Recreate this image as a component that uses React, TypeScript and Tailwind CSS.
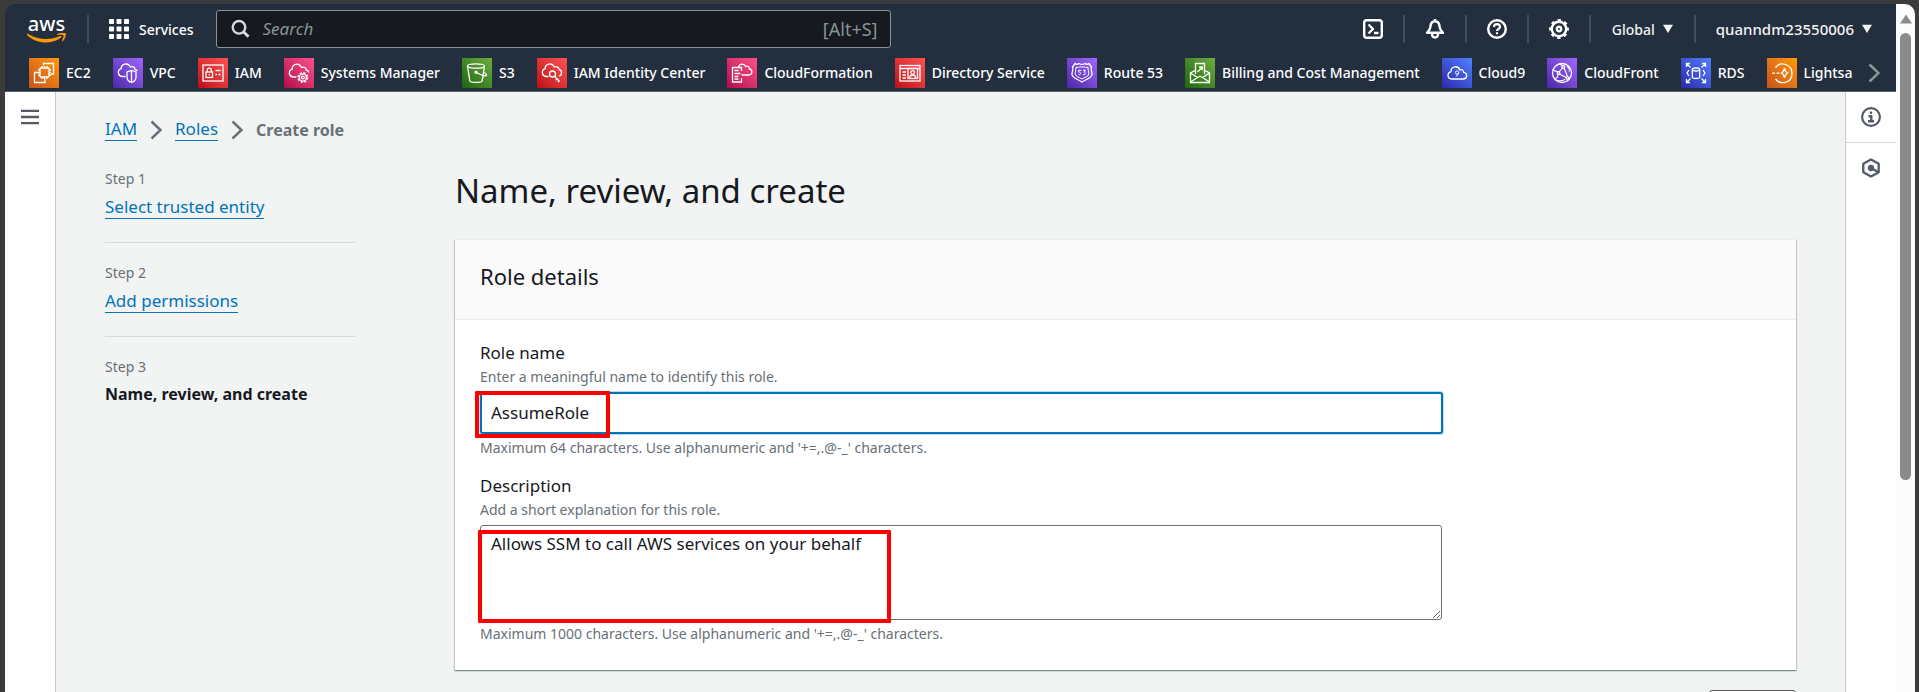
import React from "react";

type Tone = "orange" | "purple" | "red" | "pink" | "green" | "blue";

const tones: Record<Tone, string> = {
  orange: "bg-linear-to-tr from-[#c8511b] to-[#ff9900]",
  purple: "bg-linear-to-tr from-[#4d27a8] to-[#a166ff]",
  red: "bg-linear-to-tr from-[#bd0816] to-[#ff5252]",
  pink: "bg-linear-to-tr from-[#b0084d] to-[#ff4f8b]",
  green: "bg-linear-to-tr from-[#1b660f] to-[#6cae3e]",
  blue: "bg-linear-to-tr from-[#2e27ad] to-[#527fff]",
};

const favorites: { name: string; tone: Tone; art: React.ReactNode }[] = [
  {
    name: "EC2",
    tone: "orange",
    art: (
      <>
        <rect x="11" y="10" width="9" height="9" rx="0.5" />
        <path d="M13 8v2M15.5 8v2M18 8v2M13 19v2M15.5 19v2M18 19v2M9 12h2M9 14.500h2M9 17h2M20 12h2M20 14.500h2M20 17h2" />
        <path d="M14.500 7.500V5.500h10v10.500h-2.500M9.500 14.500h-4v10h10.500v-3.500" />
      </>
    ),
  },
  {
    name: "VPC",
    tone: "purple",
    art: (
      <>
        <path d="M12.500 18.500H9a4 4 0 0 1-.8-7.800C8 6.500 14.500 3.500 17.500 9c2.500-1 4.500.6 4.500 2.500 1 .2 1.800.8 2.200 1.500" />
        <path d="M18.500 12.500l4.500 1.500v5c0 3-2.200 4.800-4.500 5.500-2.300-.7-4.500-2.500-4.500-5.500v-5zM18.500 13v11" />
      </>
    ),
  },
  {
    name: "IAM",
    tone: "red",
    art: (
      <>
        <rect x="5" y="7" width="20" height="16" />
        <rect x="8" y="14" width="6.500" height="5.500" />
        <path d="M9.300 14v-1.800a2 2 0 0 1 4 0V14M11.200 16v1.500M17.500 12.500h5M17.500 16.500h1.500M20.500 16.500h2" />
      </>
    ),
  },
  {
    name: "Systems Manager",
    tone: "pink",
    art: (
      <>
        <path d="M12.500 19H9a4 4 0 0 1-.8-7.800C8 6.500 14.500 3.500 17.500 9.500c2.500-1.200 4.500.4 4.700 2.500 1.300.3 2.300 1 2.600 2.500" />
        <circle cx="18.800" cy="19.500" r="3.600" />
        <circle cx="18.800" cy="19.500" r="1.400" />
        <circle cx="18.800" cy="19.500" r="4.700" strokeDasharray="2 1.700" strokeWidth="1.500" />
      </>
    ),
  },
  {
    name: "S3",
    tone: "green",
    art: (
      <>
        <ellipse cx="14" cy="8" rx="8.500" ry="2.200" />
        <path d="M5.500 8l2.300 14.800c.4 2 12 2 12.400 0l2.300-14.800M14.500 14.500c4 2.300 9.500 4.500 10 2.800.3-1-1.500-2.300-2.800-3" />
        <circle cx="14" cy="14.200" r="1" fill="#fff" />
      </>
    ),
  },
  {
    name: "IAM Identity Center",
    tone: "red",
    art: (
      <>
        <path d="M11.500 18.500H9a4 4 0 0 1-.8-7.800C8 6 14.500 3.800 17.300 9c2.500-1 4.700.4 4.900 2.500 3 .8 3.300 5.500-.2 6.600" />
        <circle cx="15.500" cy="16" r="3" />
        <path d="M17.700 18.200l5 5.300M20 20.700l-1.300 1.500M22 22.800l-1.200 1.400" />
      </>
    ),
  },
  {
    name: "CloudFormation",
    tone: "pink",
    art: (
      <>
        <path d="M14.500 13V9.500h-9v14.500h9v-4" />
        <path d="M7.500 12.500h4M7.500 15.500h6M7.500 18.500h4M7.500 21h4M14.500 17h7c4 0 4.500-5.300 1-6 0-2.500-2-3.500-3.800-2.500-1.800-3.500-6.700-3-7.200 1" />
      </>
    ),
  },
  {
    name: "Directory Service",
    tone: "red",
    art: (
      <>
        <rect x="5" y="7.500" width="20" height="15.500" />
        <path d="M5 10.500h20M7.500 14h3.500M7.500 17h3.500M7.500 20h3.500" />
        <rect x="13" y="10.500" width="9.500" height="10" />
        <circle cx="17.700" cy="14.500" r="1.800" />
        <path d="M14.800 20c0-4 5.800-4 5.800 0" />
      </>
    ),
  },
  {
    name: "Route 53",
    tone: "purple",
    art: (
      <>
        <path d="M8 5.500c1.500 1 3 .9 4 0 1.500 1 4.500 1 6 0 1 .9 2.500 1 4 0L24.500 9c-1.500 2 .8 4.500.5 7.500-.5 4-6 4.500-10 7.500-4-3-9.500-3.500-10-7.500-.3-3 2-5.500.5-7.500z" />
        <path d="M9 9c2 .8 3.500.3 4-.3 1 .5 3 .5 4 0 .5.600 2 1.100 4 .3M9 9c.3 2.500-1 4.500-.8 7 .5 3 4 3 6.800 5 2.800-2 6.300-2 6.800-5 .2-2.500-1.100-4.500-.8-7" strokeWidth="1" />
        <path d="M14.200 12.300h-2.500v1.900c2.500-.6 2.900 3-.2 2.500M16 12.300h2.500l-1.300 1.900c2 .2 1.400 3-1.200 2.600" strokeWidth="1" />
      </>
    ),
  },
  {
    name: "Billing and Cost Management",
    tone: "green",
    art: (
      <>
        <path d="M10.500 16V5.500h9V16M10 12.500L5.500 15v9.500h19V15L20 12.500" />
        <path d="M5.500 15l7 4.500 2.500-1.300 2.500 1.300 7-4.500M5.500 24l7-4.500M24.500 24l-7-4.500M12.500 14l4.500-4.500M14 9h3.300v3.300" />
      </>
    ),
  },
  {
    name: "Cloud9",
    tone: "blue",
    art: (
      <>
        <path d="M9.500 21C5 21 5 14.300 9 13.800 8.800 8 16 7 18 12c2-1 3.500.3 3.600 2.300 4.400.7 3.900 6.700-.3 6.700z" />
        <circle cx="15" cy="14.500" r="1.600" strokeWidth="0.9" />
        <path d="M16.600 14.500c0 2-.8 3-2.600 3.500" strokeWidth="0.9" />
      </>
    ),
  },
  {
    name: "CloudFront",
    tone: "purple",
    art: (
      <>
        <circle cx="15" cy="15" r="9.500" />
        <path d="M6 12c3 1.500 4.500 1 5.500 2.500M12 14l3.500-4M12.500 16l7.500 4M7.500 21c2-.5 3.500-2 3.500-5M12 6c1.500.2 2.500 1 3.500 2.500M17 10l3.500 8.500M9 22c2 .8 6 1 9-.5M20 8c2 1.500 2.500 3 2.500 5.500" strokeWidth="1.100" />
        <circle cx="11.500" cy="15" r="1.400" />
        <circle cx="16.300" cy="9" r="1.400" />
        <circle cx="20.500" cy="20" r="1.400" />
      </>
    ),
  },
  {
    name: "RDS",
    tone: "blue",
    art: (
      <>
        <ellipse cx="15" cy="11.500" rx="3.700" ry="1.500" />
        <path d="M11.300 11.500v7.500c0 2 7.400 2 7.400 0v-7.500" />
        <path d="M5.500 9V5.500H9M6 6l3.500 3.500M21 5.500h3.500V9M24 6l-3.500 3.500M5.500 21v3.500H9M6 24l3.500-3.500M21 24.500h3.500V21M24 24l-3.500-3.500" />
        <path d="M8 12l-2 3 2 3M22 12l2 3-2 3" />
      </>
    ),
  },
  {
    name: "Lightsa",
    tone: "orange",
    art: (
      <>
        <path d="M8.500 9.500c5-6.500 16.500-3.500 16.500 6s-11.500 12-16.500 5.500" />
        <path d="M17.500 10c.5 2.800 1 4 3 5-2 1-2.500 2.200-3 5-.5-2.800-1-4-3-5 2-1 2.500-2.200 3-5zM5 15.200h3M9.500 15.200h3" />
      </>
    ),
  },
];

function AwsLogo() {
  return (
    <span className="flex w-[39px] flex-col items-center">
      <span className="text-[20px] leading-[18px] font-medium">aws</span>
      <svg className="h-[11px] w-[39px]" viewBox="0 17 39 11" aria-hidden="true">
        <path d="M0 18.200c.3-.5.800-.5 1.300-.2 9.500 6 22 6.500 31.700 2 1.300-.5 2 .7 1 1.500C24.500 28.800 9.500 28 .3 19.200 0 18.900-.1 18.500 0 18.200z" fill="#f90" />
        <path d="M30 18.300c2.500-1.800 7.500-2 8.500-1 .9 1-.3 6-2.800 8-.5.4-1 .2-.7-.4.8-2 2-4.800 1.300-5.600-.8-.8-3.600-.6-5.800-.4-.7.100-.8-.3-.5-.6z" fill="#f90" />
      </svg>
    </span>
  );
}

function Divider() {
  return <span className="h-7 w-0.5 shrink-0 bg-[#414d5c]" />;
}

function Caret() {
  return (
    <svg className="h-2.5 w-2.5" viewBox="0 0 10 10" aria-hidden="true">
      <path d="M0 0.800h10L5 9z" fill="currentColor" />
    </svg>
  );
}

function Chevron() {
  return (
    <svg className="h-5 w-3 shrink-0" viewBox="0 0 12 20" fill="none" stroke="currentColor" strokeWidth="2.500" aria-hidden="true">
      <path d="M1.500 1.500L10.500 10l-9 8.500" />
    </svg>
  );
}

function IconButton({ label, children }: { label: string; children: React.ReactNode }) {
  return (
    <button type="button" aria-label={label} className="flex h-7 w-[60px] items-center justify-center">
      <svg className="h-5 w-5" viewBox="0 0 20 20" fill="none" stroke="currentColor" strokeWidth="2.400" strokeLinejoin="round" aria-hidden="true">
        {children}
      </svg>
    </button>
  );
}

function Header() {
  return (
    <header className="border-b border-[#545b64] bg-[#232f3e] text-white">
      <div className="flex h-[50px] items-center">
        <a href="#home" className="ml-[22px] mr-[21px]">
          <AwsLogo />
        </a>
        <Divider />
        <button type="button" className="mr-[22px] ml-5 flex items-center gap-2.5 text-[14px] font-medium">
          <svg className="h-5 w-5" viewBox="0 0 20 20" fill="currentColor" aria-hidden="true">
            {[0, 7.500, 15].map((y) =>
              [0, 7.500, 15].map((x) => <rect key={`${x}-${y}`} x={x} y={y} width="5" height="5" rx="0.800" />),
            )}
          </svg>
          Services
        </button>
        <label className="flex h-[38px] w-[675px] items-center rounded-[3px] border border-[#879596] bg-[#16191f] px-3 text-[#879596]">
          <svg className="mr-3 ml-0.5 h-5 w-5 shrink-0" viewBox="0 0 20 20" fill="none" stroke="#d5dbdb" strokeWidth="2.400" aria-hidden="true">
            <circle cx="8" cy="8.300" r="6.300" />
            <path d="M12.500 12.800l5 5" strokeWidth="3" />
          </svg>
          <input
            type="search"
            aria-label="Search"
            placeholder="Search"
            className="min-w-0 flex-1 bg-transparent text-[17px] outline-none placeholder:text-[#879596] placeholder:italic"
          />
          <span className="text-[18px]">[Alt+S]</span>
        </label>
        <div className="ml-auto flex items-center">
          <IconButton label="CloudShell">
            <rect x="1.200" y="1.200" width="17.600" height="17.600" rx="2.500" />
            <path d="M5.500 5.500L10 10l-4.500 4.500M11 14h4.500" />
          </IconButton>
          <Divider />
          <IconButton label="Notifications">
            <path d="M10 2.200c-3.500 0-4.300 2.500-4.500 5.300C5.300 10.500 4 12 2 13.800h16c-2-1.800-3.300-3.300-3.500-6.300-.2-2.800-1-5.300-4.500-5.300zM10 0v2M7 14.500c0 5.300 6 5.300 6 0" />
          </IconButton>
          <Divider />
          <IconButton label="Help">
            <circle cx="10" cy="10" r="8.800" />
            <path d="M7 8c0-3.800 6-3.800 6 0 0 2-3 2-3 4M10 13.300v2" strokeWidth="2.200" />
          </IconButton>
          <Divider />
          <IconButton label="Settings">
            <circle cx="10" cy="10" r="7.200" />
            <circle cx="10" cy="10" r="2.200" />
            <circle cx="10" cy="10" r="8.800" strokeWidth="2.200" strokeDasharray="3.400 3.510" strokeDashoffset="1.700" />
          </IconButton>
          <Divider />
          <button type="button" className="flex items-center gap-2 px-[21px] text-[14px] font-medium text-[#f2f3f3]">
            Global
            <Caret />
          </button>
          <Divider />
          <button type="button" className="flex items-center gap-2 pl-5 pr-6 text-[15px] font-medium text-[#f2f3f3]">
            quanndm23550006
            <Caret />
          </button>
        </div>
      </div>
      <div className="flex h-[37px] items-center">
        <nav aria-label="Favorites" className="flex min-w-0 flex-1 gap-[22px] overflow-hidden pl-6">
          {favorites.map((f) => (
            <a key={f.name} href="#service" className="flex shrink-0 items-center gap-[7px] text-[14px] font-medium whitespace-nowrap">
              <span className={`h-[30px] w-[30px] ${tones[f.tone]}`}>
                <svg className="h-[30px] w-[30px]" viewBox="0 0 30 30" fill="none" stroke="#fff" strokeWidth="1.300" aria-hidden="true">
                  {f.art}
                </svg>
              </span>
              {f.name}
            </a>
          ))}
        </nav>
        <button type="button" aria-label="Scroll favorites right" className="ml-2.5 mr-4 text-[#879596]">
          <Chevron />
        </button>
      </div>
    </header>
  );
}

function Step({ n, children }: { n: number; children: React.ReactNode }) {
  return (
    <li className="border-b border-[#d5dbdb] pt-5 pb-[23px] first:pt-0 last:border-b-0">
      <p className="mb-1.5 text-[14px] leading-5 text-[#687078]">Step {n}</p>
      {children}
    </li>
  );
}

const link = "inline-block border-b border-[#0073bb] text-[17px] leading-[22px] text-[#0073bb]";

function Sidebar() {
  return (
    <ol className="w-[250px] shrink-0">
      <Step n={1}>
        <a href="#trusted-entity" className={link}>
          Select trusted entity
        </a>
      </Step>
      <Step n={2}>
        <a href="#permissions" className={link}>
          Add permissions
        </a>
      </Step>
      <Step n={3}>
        <p className="text-[16px] leading-[22px] font-bold">Name, review, and create</p>
      </Step>
    </ol>
  );
}

function RoleDetails() {
  return (
    <section className="border-t border-[#eaeded] bg-white shadow-[0_1px_1px_0_rgba(0,28,36,0.3),1px_1px_1px_0_rgba(0,28,36,0.15),-1px_1px_1px_0_rgba(0,28,36,0.15)]">
      <div className="border-b border-[#eaeded] bg-[#fafafa] px-[25px] pt-[21px] pb-7">
        <h2 className="text-[22px] leading-[30px]">Role details</h2>
      </div>
      <div className="flex flex-col gap-4 px-[25px] pt-[21px] pb-[26px]">
        <div className="relative max-w-[963px]">
          <label htmlFor="role-name" className="block text-[17px] leading-6">
            Role name
          </label>
          <p className="mt-0.5 mb-[5px] text-[14px] leading-5 text-[#687078]">Enter a meaningful name to identify this role.</p>
          <input
            id="role-name"
            type="text"
            defaultValue="AssumeRole"
            className="block h-[42px] w-full rounded-[3px] border-2 border-[#0073bb] bg-white px-[9px] pb-0.5 text-[17px] shadow-[0_0_0_1px_#b8dcf0] outline-none"
          />
          <p className="mt-1 text-[14px] leading-5 text-[#687078]">Maximum 64 characters. Use alphanumeric and '+=,.@-_' characters.</p>
          <span className="pointer-events-none absolute top-[50px] -left-[5px] h-[47px] w-[135px] rounded-[1px] border-4 border-[#ff0000]" />
        </div>
        <div className="relative max-w-[962px]">
          <label htmlFor="description" className="block text-[17px] leading-6">
            Description
          </label>
          <p className="mt-0.5 mb-[5px] text-[14px] leading-5 text-[#687078]">Add a short explanation for this role.</p>
          <textarea
            id="description"
            defaultValue="Allows SSM to call AWS services on your behalf"
            className="block h-[95px] w-full rounded-[3px] border border-[#687078] bg-white px-2.5 pt-[7px] text-[17px] leading-[22px] outline-none"
          />
          <p className="mt-1 text-[14px] leading-5 text-[#687078]">Maximum 1000 characters. Use alphanumeric and '+=,.@-_' characters.</p>
          <span className="pointer-events-none absolute top-14 -left-0.5 h-[93px] w-[413px] rounded-[1px] border-4 border-[#ff0000]" />
        </div>
      </div>
    </section>
  );
}

function ScrollTrack() {
  return (
    <div className="flex w-[19px] shrink-0 flex-col items-center bg-[#fcfcfc] pt-2.5">
      <svg className="h-2.5 w-3" viewBox="0 0 12 10" aria-hidden="true">
        <path d="M6 0.500L12 9.500H0z" fill="#8b8b8b" strokeLinejoin="round" />
      </svg>
      <div className="mt-[9px] h-[447px] w-[11px] rounded-full bg-[#8b8b8b]" />
    </div>
  );
}

export default function App() {
  return (
    <div className="h-screen overflow-hidden bg-[#3b3b3b] pt-1 pr-1 pl-[5px] font-['Noto_Sans',sans-serif] text-[#16191f]">
      <div className="flex h-full overflow-hidden rounded-t-[10px]">
        <div className="flex min-w-0 flex-1 flex-col">
          <Header />
          <div className="flex min-h-0 flex-1 bg-[#f2f3f3]">
            <aside className="w-[51px] shrink-0 border-r border-[#c5cacb] bg-white">
              <button type="button" aria-label="Open navigation" className="flex h-[50px] w-full items-center justify-center text-[#545b64]">
                <svg className="h-4 w-[18px]" viewBox="0 0 18 16" stroke="currentColor" strokeWidth="2.300" aria-hidden="true">
                  <path d="M0 1.800h18M0 8h18M0 14.200h18" />
                </svg>
              </button>
            </aside>
            <main className="min-w-0 flex-1 overflow-hidden pt-[26px] pr-[49px] pl-[49px]">
              <nav aria-label="Breadcrumb" className="flex items-center gap-[13px] text-[#687078]">
                <a href="#iam" className={link}>
                  IAM
                </a>
                <Chevron />
                <a href="#roles" className={link}>
                  Roles
                </a>
                <Chevron />
                <span className="text-[16px] leading-[22px] font-bold">Create role</span>
              </nav>
              <div className="mt-7 flex gap-[100px]">
                <Sidebar />
                <div className="min-w-0 flex-1">
                  <h1 className="mb-7 pt-0.5 text-[33px] leading-10">Name, review, and create</h1>
                  <RoleDetails />
                  <div className="mt-5 flex justify-end">
                    <button type="button" aria-label="Edit" className="h-10 w-[87px] rounded-[3px] border border-[#545b64] bg-white" />
                  </div>
                </div>
              </div>
            </main>
            <aside className="w-[51px] shrink-0 border-l border-[#c5cacb] bg-white text-[#545b64]">
              <button type="button" aria-label="Info" className="flex h-[51px] w-full items-center justify-center border-b border-[#d5dbdb]">
                <svg className="h-5 w-5" viewBox="0 0 20 20" fill="none" stroke="currentColor" strokeWidth="2.200" aria-hidden="true">
                  <circle cx="10" cy="10" r="8.900" />
                  <path d="M10 4.500v2.600M7.500 9.300H11M10.300 8.500v6M7 14.300h6" strokeWidth="2.400" />
                </svg>
              </button>
              <button type="button" aria-label="Diagnostics" className="flex h-[50px] w-full items-center justify-center">
                <svg className="h-5 w-5" viewBox="0 0 20 20" fill="none" stroke="currentColor" strokeWidth="2.300" aria-hidden="true">
                  <path d="M10 1.500l7.700 4.300v8.400L10 18.500l-7.700-4.300V5.800z" strokeLinejoin="round" />
                  <path d="M10 10l7.500 4.200" />
                  <circle cx="10" cy="10" r="2" fill="currentColor" />
                </svg>
              </button>
            </aside>
          </div>
        </div>
        <ScrollTrack />
      </div>
    </div>
  );
}
